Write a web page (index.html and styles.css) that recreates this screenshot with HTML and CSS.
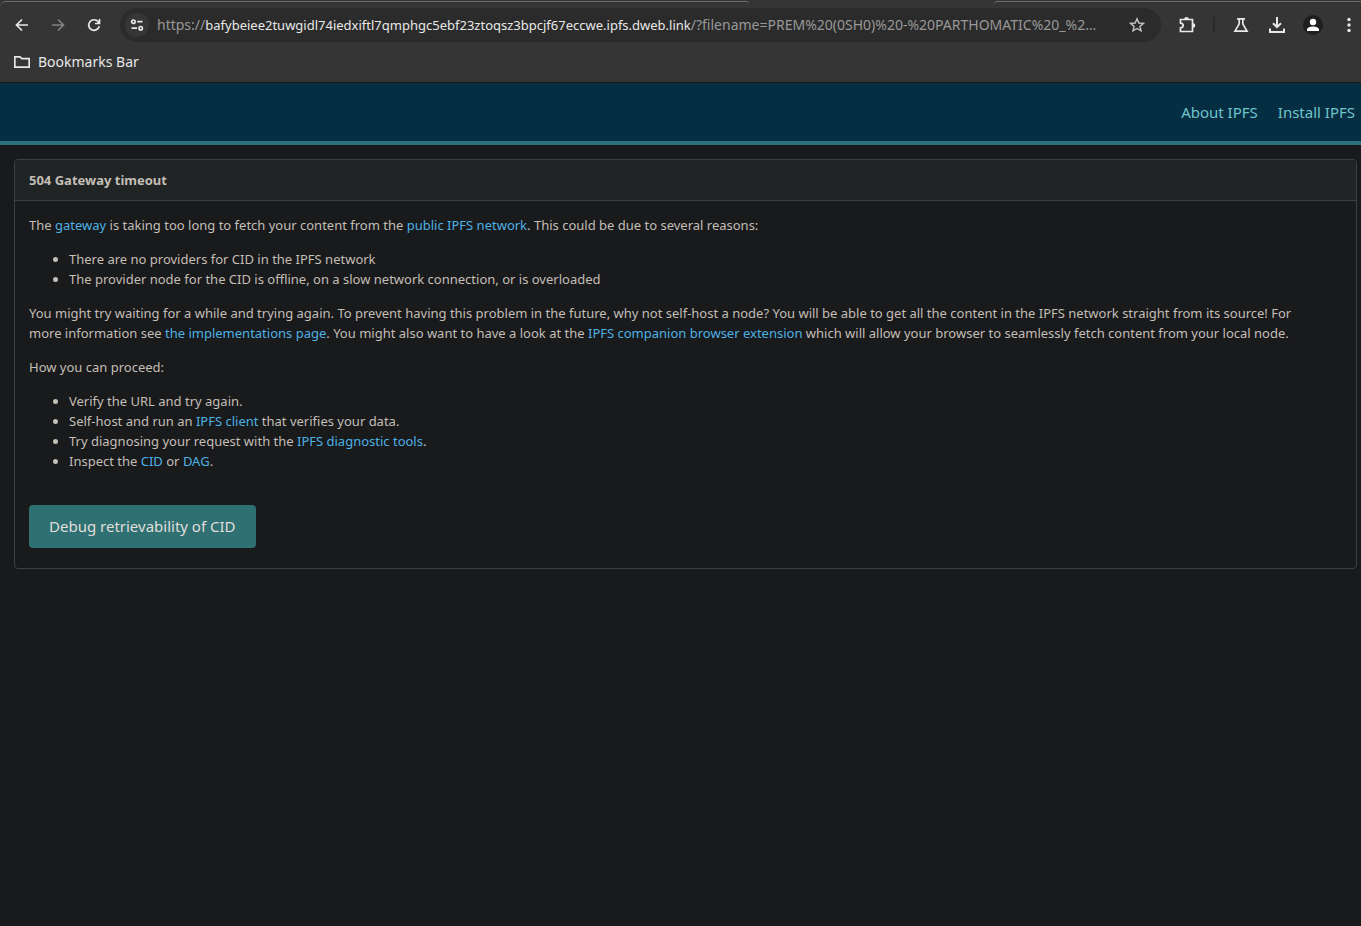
FILE: index.html
```html
<!DOCTYPE html>
<html lang="en">
<head>
    <meta charset="UTF-8">
    <meta name="viewport" content="width=device-width, initial-scale=1.0">
    <title>504 Gateway timeout</title>
    <link rel="stylesheet" href="styles.css">
</head>
<body>
    <div class="browser">
        <div class="tab-strip">
            <span class="tab-edge left"></span>
            <span class="tab-edge right"></span>
        </div>
        <div class="toolbar">
            <button class="tool" type="button" aria-label="Back">
                <svg viewBox="0 0 16 16"><path d="M14 8H3M8 2.5L2.5 8L8 13.5"/></svg>
            </button>
            <button class="tool dim" type="button" aria-label="Forward">
                <svg viewBox="0 0 16 16"><path d="M2 8H13M8 2.5L13.5 8L8 13.5"/></svg>
            </button>
            <button class="tool" type="button" aria-label="Reload">
                <svg viewBox="0 0 16 16"><path d="M13.2 9.2A5.3 5.3 0 1 1 12.2 4.8L13.5 6.5M13.5 2V6.5H9"/></svg>
            </button>
            <div class="address">
                <button class="site-info" type="button" aria-label="Site information">
                    <svg viewBox="0 0 16 16"><circle cx="4.4" cy="4.7" r="1.7"/><path d="M8.2 4.7H13.5M2.5 11.2H8"/><circle cx="11.7" cy="11.2" r="1.7"/></svg>
                </button>
                <a class="url" href="#">https://<b>bafybeiee2tuwgidl74iedxiftl7qmphgc5ebf23ztoqsz3bpcjf67eccwe.ipfs.dweb.link</b>/?filename=PREM%20(0SH0)%20-%20PARTHOMATIC%20_%2…</a>
                <button class="star" type="button" aria-label="Bookmark this page">
                    <svg viewBox="0 0 16 16"><path d="M8 1.8L9.8 6L14.4 6.4L10.9 9.4L12 13.9L8 11.5L4 13.9L5.1 9.4L1.6 6.4L6.2 6Z"/></svg>
                </button>
            </div>
            <div class="actions">
                <button class="tool" type="button" aria-label="Extensions">
                    <svg class="big" viewBox="0 0 18 18"><path d="M2.5 3.5H14.5V15.5H2.5V11.8C4.3 11.6 5.2 10.8 5.2 9.5S4.3 7.4 2.5 7.2Z"/><path class="solid" d="M6.2 3.2A2.3 2.3 0 0 1 10.8 3.2ZM15 7.2A2.3 2.3 0 0 1 15 11.8Z"/></svg>
                </button>
                <span class="divider"></span>
                <button class="tool" type="button" aria-label="Experiments">
                    <svg viewBox="0 0 16 16"><path d="M4 1.8H12M6.2 2V6.8L2 14.1H14L9.8 6.8V2"/></svg>
                </button>
                <button class="tool" type="button" aria-label="Downloads">
                    <svg class="big" viewBox="0 0 18 18"><path class="heavy" d="M9 1V11M5 7.2L9 11.2L13 7.2M2 12.5V16H16V12.5"/></svg>
                </button>
                <button class="tool" type="button" aria-label="Profile">
                    <svg class="avatar" viewBox="0 0 20 20"><circle class="disc" cx="10" cy="10" r="10"/><circle class="person" cx="10" cy="7" r="3.2"/><path class="person" d="M4 16V14.6C4 12.6 7.4 11.4 10 11.4S16 12.6 16 14.6V16Z"/></svg>
                </button>
                <button class="tool" type="button" aria-label="Menu">
                    <svg viewBox="0 0 16 16"><g class="dots"><circle cx="8" cy="2.5" r="1.7"/><circle cx="8" cy="8" r="1.7"/><circle cx="8" cy="13.5" r="1.7"/></g></svg>
                </button>
            </div>
        </div>
        <div class="bookmarks">
            <button class="folder" type="button">
                <svg viewBox="0 0 16 16"><path d="M0.8 2.8H6L7.8 4.6H15.2V13.2H0.8Z"/></svg>
                Bookmarks Bar
            </button>
        </div>
    </div>

    <header class="header">
        <nav>
            <a href="#">About IPFS</a>
            <a href="#">Install IPFS</a>
        </nav>
    </header>

    <main class="panel">
        <h1>504 Gateway timeout</h1>
        <section class="content">
            <p>The <a href="#">gateway</a> is taking too long to fetch your content from the <a href="#">public IPFS network</a>. This could be due to several reasons:</p>
            <ul>
                <li>There are no providers for CID in the IPFS network</li>
                <li>The provider node for the CID is offline, on a slow network connection, or is overloaded</li>
            </ul>
            <p>You might try waiting for a while and trying again. To prevent having this problem in the future, why not self-host a node? You will be able to get all the content in the IPFS network straight from its source! For<br>
            more information see <a href="#">the implementations page</a>. You might also want to have a look at the <a href="#">IPFS companion browser extension</a> which will allow your browser to seamlessly fetch content from your local node.</p>
            <p>How you can proceed:</p>
            <ul>
                <li>Verify the URL and try again.</li>
                <li>Self-host and run an <a href="#">IPFS client</a> that verifies your data.</li>
                <li>Try diagnosing your request with the <a href="#">IPFS diagnostic tools</a>.</li>
                <li>Inspect the <a href="#">CID</a> or <a href="#">DAG</a>.</li>
            </ul>
            <a class="debug" href="#">Debug retrievability of CID</a>
        </section>
    </main>
</body>
</html>
```
FILE: styles.css
```css
*{
    box-sizing: border-box;
}

body{
    margin: 0;
    background: #191a1c;
    color: #c3beb6;
    font-family: "Noto Sans", "Open Sans", sans-serif;
    font-size: 13px;
    line-height: 20px;
}

a{
    color: #4eb1e3;
    text-decoration: none;
}

button{
    border: 0;
    padding: 0;
    background: none;
    color: inherit;
    font: inherit;
}

/* browser bars */
.browser{
    background: #353535;
    border-bottom: 1px solid #181818;
    color: #e8e8e8;
    font-size: 14px;
}

.browser svg{
    display: block;
    width: 16px;
    height: 16px;
    fill: none;
    stroke: currentColor;
    stroke-width: 1.7;
}

.tab-strip{
    display: flex;
    justify-content: space-between;
    height: 7px;
    padding-top: 1px;
}

.tab-edge{
    border-top: 1px solid #6b6b6b;
}

.tab-edge.left{
    width: 55%;
    border-radius: 8px 4px 0 0;
}

.tab-edge.right{
    width: 27%;
    border-radius: 4px 0 0 0;
}

.toolbar{
    display: flex;
    align-items: center;
    height: 36px;
    padding-left: 4px;
}

.tool{
    display: flex;
    flex: none;
    align-items: center;
    justify-content: center;
    width: 36px;
    height: 36px;
}

.dim{
    color: #808080;
}

.address{
    display: flex;
    flex: 1;
    align-items: center;
    min-width: 0;
    height: 34px;
    margin: 0 8px;
    padding: 0 16px 0 5px;
    border-radius: 17px;
    background: #2b2b2b;
}

.site-info{
    display: flex;
    flex: none;
    align-items: center;
    justify-content: center;
    width: 24px;
    height: 24px;
    margin-right: 8px;
    border-radius: 50%;
    background: #363636;
}

.url{
    flex: 1;
    overflow: hidden;
    color: #989898;
    text-overflow: ellipsis;
    white-space: nowrap;
}

.url b{
    color: #e8e8e8;
    font-size: 13px;
    font-weight: normal;
}

.star{
    flex: none;
    color: #c4c4c4;
}

.browser .star svg{
    stroke-width: 1.4;
}

.actions{
    display: flex;
    align-items: center;
    margin-right: -6px;
}

.browser .big{
    width: 18px;
    height: 18px;
}

.browser .avatar{
    width: 20px;
    height: 20px;
    stroke: none;
}

.heavy{
    stroke-width: 2;
}

.solid,
.dots{
    fill: currentColor;
    stroke: none;
}

.disc{
    fill: #1e2020;
}

.person{
    fill: #fff;
}

.divider{
    width: 2px;
    height: 16px;
    margin: 0 8px;
    background: #282828;
}

.bookmarks{
    display: flex;
    height: 39px;
    padding: 8px 14px 0;
}

.folder{
    display: flex;
    align-items: center;
    gap: 8px;
    height: 22px;
}

/* page */
.header{
    display: flex;
    align-items: center;
    justify-content: flex-end;
    height: 62px;
    padding-right: 6px;
    border-bottom: 4px solid #2a737b;
    background: #062e43;
}

.header nav{
    display: flex;
    gap: 20px;
    font-size: 15px;
}

.header a{
    color: #6fc4cb;
}

.panel{
    margin: 14px 4px 14px 14px;
    border: 1px solid #3c4041;
    border-radius: 4px;
}

.panel h1{
    margin: 0;
    padding: 10px 14px;
    border-bottom: 1px solid #3c4041;
    border-radius: 3px 3px 0 0;
    background: #202425;
    font-size: 13px;
    line-height: 20px;
}

.content{
    padding: 14px 14px 20px;
}

.content p,
.content ul{
    margin: 0 0 14px;
}

.debug{
    display: inline-block;
    margin-top: 20px;
    padding: 11px 20px;
    border-radius: 4px;
    background: #2f7073;
    color: #e0deda;
    font-size: 15px;
    line-height: 21px;
    vertical-align: top;
}
```
